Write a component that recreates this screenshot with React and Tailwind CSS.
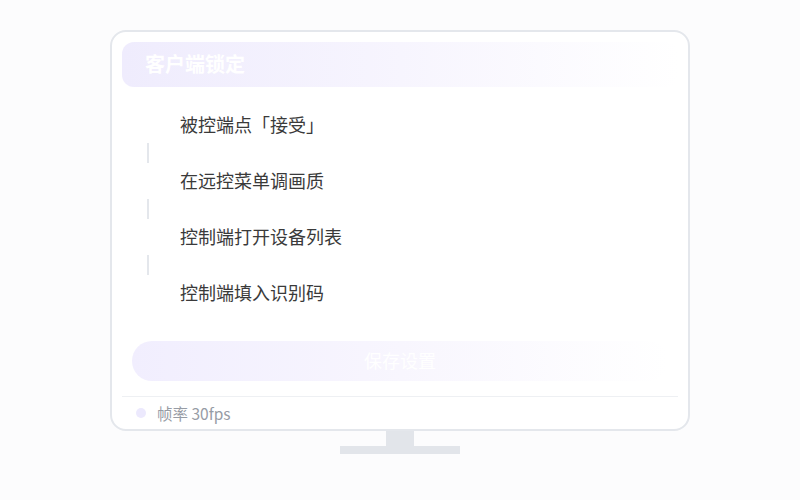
const steps = ["被控端点「接受」", "在远控菜单调画质", "控制端打开设备列表", "控制端填入识别码"];

export default function App() {
  return (
    <div
      className="min-h-[500px] w-[800px] bg-[#fcfcfd] pt-[30px] flex flex-col items-center"
      style={{ fontFamily: '"Noto Sans CJK SC", "Noto Sans", sans-serif' }}
    >
      <div className="w-[580px] border-2 border-[#e4e7ec] rounded-2xl bg-white px-[10px] pt-[10px] pb-[6px]">
        <div className="h-[45px] rounded-xl bg-gradient-to-r from-[#efecfd] via-[#f7f5fe] to-white/0 flex items-center pl-[23px]">
          <span className="text-white font-bold text-[20px] leading-none -mt-px">客户端锁定</span>
        </div>

        <div className="mt-5 pl-2">
          {steps.map((s, i) => (
            <div key={s} className="flex">
              <div className="w-9 flex flex-col items-center">
                <div className="w-9 h-9 rounded-full bg-white" />
                {i < steps.length - 1 && <div className="w-0.5 h-5 bg-[#e4e7ec]" />}
              </div>
              <div className="ml-[14px] h-9 flex items-center">
                <span className="text-[18px] leading-none -mt-[3px] text-[#3a3a3a]">{s}</span>
              </div>
            </div>
          ))}
        </div>

        <div className="mt-[30px] mx-[10px] h-10 rounded-full bg-gradient-to-r from-[#f1eefe] via-[#f8f6fe] to-white/0 flex items-center justify-center">
          <span className="text-white text-[18px] leading-none -mt-[2px]">保存设置</span>
        </div>

        <div className="mt-[15px] h-px bg-[#eef0f3]" />

        <div className="pt-[6px] pl-[14px] flex items-center h-[26px]">
          <div className="w-2.5 h-2.5 rounded-full bg-[#ece9fd]" />
          <span className="ml-[11px] text-[15.5px] text-[#979ca5] leading-5">帧率 30fps</span>
        </div>
      </div>
      <div className="w-7 h-[15px] bg-[#e2e5ea]" />
      <div className="w-[120px] h-2 bg-[#e2e5ea]" />
    </div>
  );
}
